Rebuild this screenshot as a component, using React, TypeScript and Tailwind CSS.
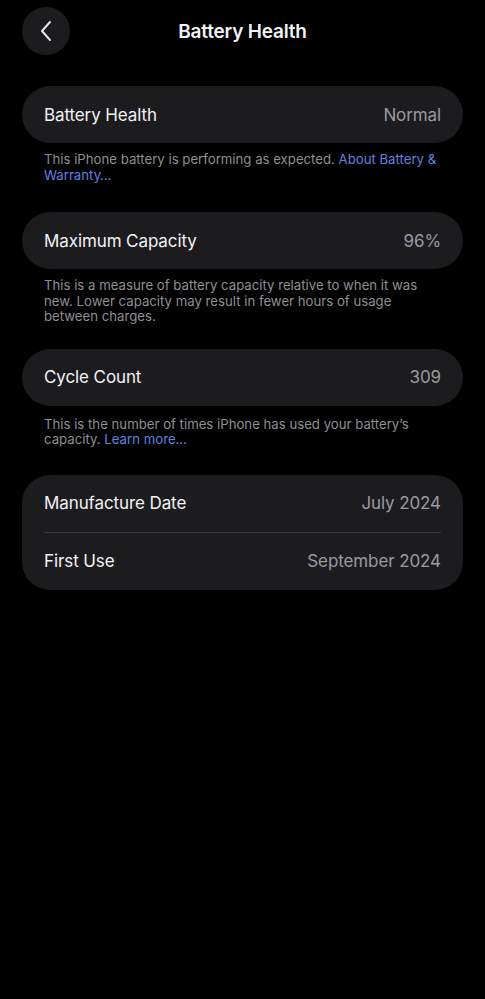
import React from 'react';

const font = { fontFamily: 'Inter, "Noto Sans", sans-serif' };

interface RowProps {
  label: string;
  value: string;
}

const Row: React.FC<RowProps> = ({ label, value }) => (
  <div className="flex items-center justify-between h-[57px] px-[22px] pt-[2px]">
    <span className="text-[17px] text-[#f2f2f7] tracking-[-0.1px]">{label}</span>
    <span className="text-[17px] text-[#9a9aa0] tracking-[-0.1px]">{value}</span>
  </div>
);

const Footer: React.FC<{ children: React.ReactNode; className?: string }> = ({ children, className = 'pt-[9px]' }) => (
  <p className={`px-[22px] text-[13.2px] leading-[15.5px] text-[#8e8e93] ${className}`}>{children}</p>
);

const Link: React.FC<{ children: React.ReactNode }> = ({ children }) => (
  <span className="text-[#5a84e0]">{children}</span>
);

export default function App() {
  return (
    <div className="min-h-[999px] w-full bg-black text-white" style={font}>
      {/* Nav bar */}
      <div className="relative flex items-center justify-center h-[62px]">
        <button className="absolute left-[22px] top-[7px] w-12 h-12 rounded-full bg-[#1c1c1e] flex items-center justify-center">
          <svg width="14" height="22" viewBox="0 0 14 22" fill="none">
            <path d="M11 2 L3 11 L11 20" stroke="#e5e5ea" strokeWidth="2" strokeLinecap="round" strokeLinejoin="round" />
          </svg>
        </button>
        <h1 className="mt-[2px] text-[19px] font-semibold tracking-[-0.2px] text-[#f2f2f7]">Battery Health</h1>
      </div>

      <div className="px-[22px] pt-[24px]">
        <div className="rounded-full bg-[#1c1c1e]">
          <Row label="Battery Health" value="Normal" />
        </div>
        <Footer>
          This iPhone battery is performing as expected. <Link>About Battery &amp; Warranty…</Link>
        </Footer>

        <div className="mt-[29px] rounded-full bg-[#1c1c1e]">
          <Row label="Maximum Capacity" value="96%" />
        </div>
        <Footer>
          This is a measure of battery capacity relative to when it was new. Lower capacity may result in fewer hours of usage between charges.
        </Footer>

        <div className="mt-[24px] rounded-full bg-[#1c1c1e]">
          <Row label="Cycle Count" value="309" />
        </div>
        <Footer className="pt-[11px]">
          This is the number of times iPhone has used your battery’s capacity. <Link>Learn more…</Link>
        </Footer>

        <div className="mt-[27px] rounded-[28px] bg-[#1c1c1e]">
          <Row label="Manufacture Date" value="July 2024" />
          <div className="mx-[22px] h-px bg-[#38383a]" />
          <Row label="First Use" value="September 2024" />
        </div>
      </div>
    </div>
  );
}
